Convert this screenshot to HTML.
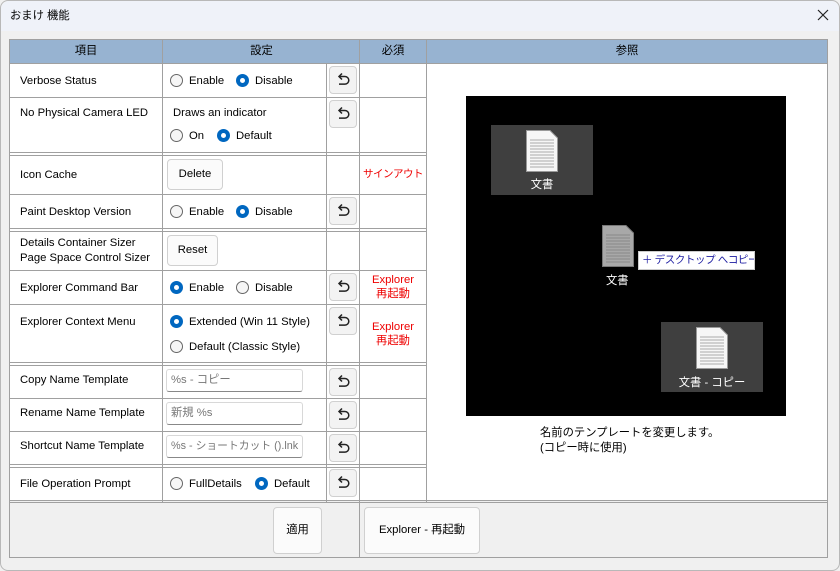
<!DOCTYPE html>
<html><head><meta charset="utf-8"><style>
*{margin:0;padding:0;box-sizing:border-box}
body{width:840px;height:571px;background:#f0f0f0;font-family:"Liberation Sans","Noto Sans CJK JP",sans-serif;font-size:11.3px;color:#000;position:relative;overflow:hidden}
.a{position:absolute}
.win{left:0;top:0;width:840px;height:571px;border:1px solid #b8b8b8;border-radius:8px;background:#f0f0f0}
.title{left:1px;top:1px;width:838px;height:30px;background:#eff2f9;border-radius:8px 8px 0 0}
.h{background:#a0a0a0}
.t{white-space:nowrap;line-height:14px}
.r{width:13px;height:13px;border-radius:50%;border:1px solid #666;background:#f6f6f6}
.rs{width:13px;height:13px;border-radius:50%;background:#0067c0}
.rs::after{content:"";position:absolute;left:4px;top:4px;width:5px;height:5px;border-radius:50%;background:#fff}
.btn{background:#fbfbfb;border:1px solid #d0d0d0;border-radius:4px;text-align:center;white-space:nowrap}
.rb{width:28px;height:28px;background:#f3f3f3;border:1px solid #d0d0d0;border-radius:4px}
.in{background:#fff;border:1px solid #d8d8d8;border-bottom:1px solid #888;border-radius:3px;color:#777;padding-left:4px;line-height:21px;width:137px;height:23px;white-space:nowrap;overflow:hidden}
.red{color:#e00;text-align:center;width:66px;line-height:14px}
</style></head><body>
<div class="a win"></div>
<div class="a title"></div>
<div class="a t" style="left:10px;top:9px">おまけ 機能</div>
<svg class="a" style="left:816px;top:8px" width="14" height="14"><path d="M2 2L12 12M12 2L2 12" stroke="#222" stroke-width="1.2"/></svg>

<div class="a" style="left:9px;top:39px;width:819px;height:462px;background:#fff"></div>
<div class="a" style="left:9px;top:39px;width:819px;height:24px;background:#97b3d1"></div>
<div class="a h" style="left:9px;top:39px;width:819px;height:1px"></div>
<div class="a h" style="left:9px;top:63px;width:819px;height:1px"></div>
<div class="a h" style="left:9px;top:39px;width:1px;height:519px"></div>
<div class="a h" style="left:827px;top:39px;width:1px;height:519px"></div>
<div class="a h" style="left:9px;top:557px;width:819px;height:1px"></div>
<div class="a h" style="left:162px;top:39px;width:1px;height:463px"></div>
<div class="a h" style="left:326px;top:63px;width:1px;height:439px"></div>
<div class="a h" style="left:359px;top:39px;width:1px;height:519px"></div>
<div class="a h" style="left:426px;top:39px;width:1px;height:463px"></div>
<div class="a h" style="left:9px;top:97px;width:418px;height:1px"></div>
<div class="a h" style="left:9px;top:152px;width:418px;height:1px"></div>
<div class="a h" style="left:9px;top:155px;width:418px;height:1px"></div>
<div class="a h" style="left:9px;top:194px;width:418px;height:1px"></div>
<div class="a h" style="left:9px;top:228px;width:418px;height:1px"></div>
<div class="a h" style="left:9px;top:231px;width:418px;height:1px"></div>
<div class="a h" style="left:9px;top:270px;width:418px;height:1px"></div>
<div class="a h" style="left:9px;top:304px;width:418px;height:1px"></div>
<div class="a h" style="left:9px;top:362px;width:418px;height:1px"></div>
<div class="a h" style="left:9px;top:365px;width:418px;height:1px"></div>
<div class="a h" style="left:9px;top:398px;width:418px;height:1px"></div>
<div class="a h" style="left:9px;top:431px;width:418px;height:1px"></div>
<div class="a h" style="left:9px;top:464px;width:418px;height:1px"></div>
<div class="a h" style="left:9px;top:467px;width:418px;height:1px"></div>
<div class="a h" style="left:9px;top:500px;width:819px;height:1px"></div>
<div class="a" style="left:10px;top:502px;width:817px;height:55px;background:#f0f0f0"></div>
<div class="a h" style="left:9px;top:502px;width:819px;height:1px"></div>
<div class="a h" style="left:359px;top:502px;width:1px;height:56px"></div>

<div class="a t" style="left:9px;top:44px;width:154px;text-align:center">項目</div>
<div class="a t" style="left:163px;top:44px;width:197px;text-align:center">設定</div>
<div class="a t" style="left:360px;top:44px;width:66px;text-align:center">必須</div>
<div class="a t" style="left:427px;top:44px;width:400px;text-align:center">参照</div>

<div class="a t" style="left:20px;top:74px">Verbose Status</div>
<div class="a t" style="left:20px;top:106px">No Physical Camera LED</div>
<div class="a t" style="left:20px;top:168px">Icon Cache</div>
<div class="a t" style="left:20px;top:205px">Paint Desktop Version</div>
<div class="a t" style="left:20px;top:236px">Details Container Sizer</div>
<div class="a t" style="left:20px;top:251px">Page Space Control Sizer</div>
<div class="a t" style="left:20px;top:281px">Explorer Command Bar</div>
<div class="a t" style="left:20px;top:315px">Explorer Context Menu</div>
<div class="a t" style="left:20px;top:373px">Copy Name Template</div>
<div class="a t" style="left:20px;top:406px">Rename Name Template</div>
<div class="a t" style="left:20px;top:439px">Shortcut Name Template</div>
<div class="a t" style="left:20px;top:477px">File Operation Prompt</div>

<div class="a r" style="left:170px;top:74px"></div><div class="a t" style="left:189px;top:74px">Enable</div>
<div class="a rs" style="left:236px;top:74px"></div><div class="a t" style="left:255px;top:74px">Disable</div>

<div class="a t" style="left:173px;top:106px">Draws an indicator</div>
<div class="a r" style="left:170px;top:129px"></div><div class="a t" style="left:189px;top:129px">On</div>
<div class="a rs" style="left:217px;top:129px"></div><div class="a t" style="left:236px;top:129px">Default</div>

<div class="a btn" style="left:167px;top:159px;width:56px;height:31px;line-height:29px">Delete</div>

<div class="a r" style="left:170px;top:205px"></div><div class="a t" style="left:189px;top:205px">Enable</div>
<div class="a rs" style="left:236px;top:205px"></div><div class="a t" style="left:255px;top:205px">Disable</div>

<div class="a btn" style="left:167px;top:235px;width:51px;height:31px;line-height:29px">Reset</div>

<div class="a rs" style="left:170px;top:281px"></div><div class="a t" style="left:189px;top:281px">Enable</div>
<div class="a r" style="left:236px;top:281px"></div><div class="a t" style="left:255px;top:281px">Disable</div>

<div class="a rs" style="left:170px;top:315px"></div><div class="a t" style="left:189px;top:315px">Extended (Win 11 Style)</div>
<div class="a r" style="left:170px;top:340px"></div><div class="a t" style="left:189px;top:340px">Default (Classic Style)</div>

<div class="a in" style="left:166px;top:369px">%s - コピー</div>
<div class="a in" style="left:166px;top:402px">新規 %s</div>
<div class="a in" style="left:166px;top:435px;font-size:10.8px">%s - ショートカット ().lnk</div>

<div class="a r" style="left:170px;top:477px"></div><div class="a t" style="left:189px;top:477px">FullDetails</div>
<div class="a rs" style="left:255px;top:477px"></div><div class="a t" style="left:274px;top:477px">Default</div>

<svg width="0" height="0" style="position:absolute"><defs><g id="u"><path d="M8 8.5H14A3.8 3.8 0 0 1 14 16.1H8" fill="none" stroke="#222" stroke-width="1.5"/><path d="M11 5.5L8 8.5L11 11.5" fill="none" stroke="#222" stroke-width="1.5"/></g></defs></svg>
<div class="a rb" style="left:329px;top:66px"><svg width="26" height="26"><use href="#u" transform="translate(1,1)"/></svg></div>
<div class="a rb" style="left:329px;top:100px"><svg width="26" height="26"><use href="#u" transform="translate(1,1)"/></svg></div>
<div class="a rb" style="left:329px;top:197px"><svg width="26" height="26"><use href="#u" transform="translate(1,1)"/></svg></div>
<div class="a rb" style="left:329px;top:273px"><svg width="26" height="26"><use href="#u" transform="translate(1,1)"/></svg></div>
<div class="a rb" style="left:329px;top:307px"><svg width="26" height="26"><use href="#u" transform="translate(1,1)"/></svg></div>
<div class="a rb" style="left:329px;top:368px"><svg width="26" height="26"><use href="#u" transform="translate(1,1)"/></svg></div>
<div class="a rb" style="left:329px;top:401px"><svg width="26" height="26"><use href="#u" transform="translate(1,1)"/></svg></div>
<div class="a rb" style="left:329px;top:434px"><svg width="26" height="26"><use href="#u" transform="translate(1,1)"/></svg></div>
<div class="a rb" style="left:329px;top:469px"><svg width="26" height="26"><use href="#u" transform="translate(1,1)"/></svg></div>

<div class="a red t" style="left:360px;top:167px;width:66px;text-align:center;font-size:10.5px;letter-spacing:-0.5px">サインアウト</div>
<div class="a red" style="left:360px;top:273px">Explorer<br>再起動</div>
<div class="a red" style="left:360px;top:320px">Explorer<br>再起動</div>

<div class="a" style="left:466px;top:96px;width:320px;height:320px;background:#000"></div>
<div class="a" style="left:491px;top:125px;width:102px;height:70px;background:#3f3f3f"></div>
<svg class="a" style="left:526px;top:130px" width="32" height="42"><path d="M0.5 0.5H24L31.5 8V41.5H0.5Z" fill="#f6f6f6" stroke="#999"/><g stroke="#aaa"><path d="M4 10H28M4 13H28M4 16H28M4 19H28M4 22H28M4 25H28M4 28H28M4 31H28M4 34H28M4 37H28"/></g></svg>
<div class="a t" style="left:491px;top:178px;width:102px;text-align:center;color:#fff">文書</div>

<svg class="a" style="left:602px;top:225px" width="32" height="42"><path d="M0.5 0.5H24L31.5 8V41.5H0.5Z" fill="#a8a8a8" stroke="#777"/><g stroke="#888"><path d="M4 10H28M4 13H28M4 16H28M4 19H28M4 22H28M4 25H28M4 28H28M4 31H28M4 34H28M4 37H28"/></g></svg>
<div class="a t" style="left:606px;top:274px;color:#fff">文書</div>
<div class="a t" style="left:638px;top:251px;width:117px;height:19px;background:#fff;border:1px solid #ccc;color:#1a1aa0;line-height:17px;padding-left:3px;font-size:10.5px;letter-spacing:-0.4px;overflow:hidden">＋ デスクトップ へコピー</div>

<div class="a" style="left:661px;top:322px;width:102px;height:70px;background:#3f3f3f"></div>
<svg class="a" style="left:696px;top:327px" width="32" height="42"><path d="M0.5 0.5H24L31.5 8V41.5H0.5Z" fill="#f6f6f6" stroke="#999"/><g stroke="#aaa"><path d="M4 10H28M4 13H28M4 16H28M4 19H28M4 22H28M4 25H28M4 28H28M4 31H28M4 34H28M4 37H28"/></g></svg>
<div class="a t" style="left:661px;top:376px;width:102px;text-align:center;color:#fff">文書 - コピー</div>

<div class="a t" style="left:540px;top:426px">名前のテンプレートを変更します。</div>
<div class="a t" style="left:540px;top:441px">(コピー時に使用)</div>

<div class="a btn" style="left:273px;top:507px;width:49px;height:47px;line-height:45px">適用</div>
<div class="a btn" style="left:364px;top:507px;width:116px;height:47px;line-height:45px">Explorer - 再起動</div>
</body></html>
